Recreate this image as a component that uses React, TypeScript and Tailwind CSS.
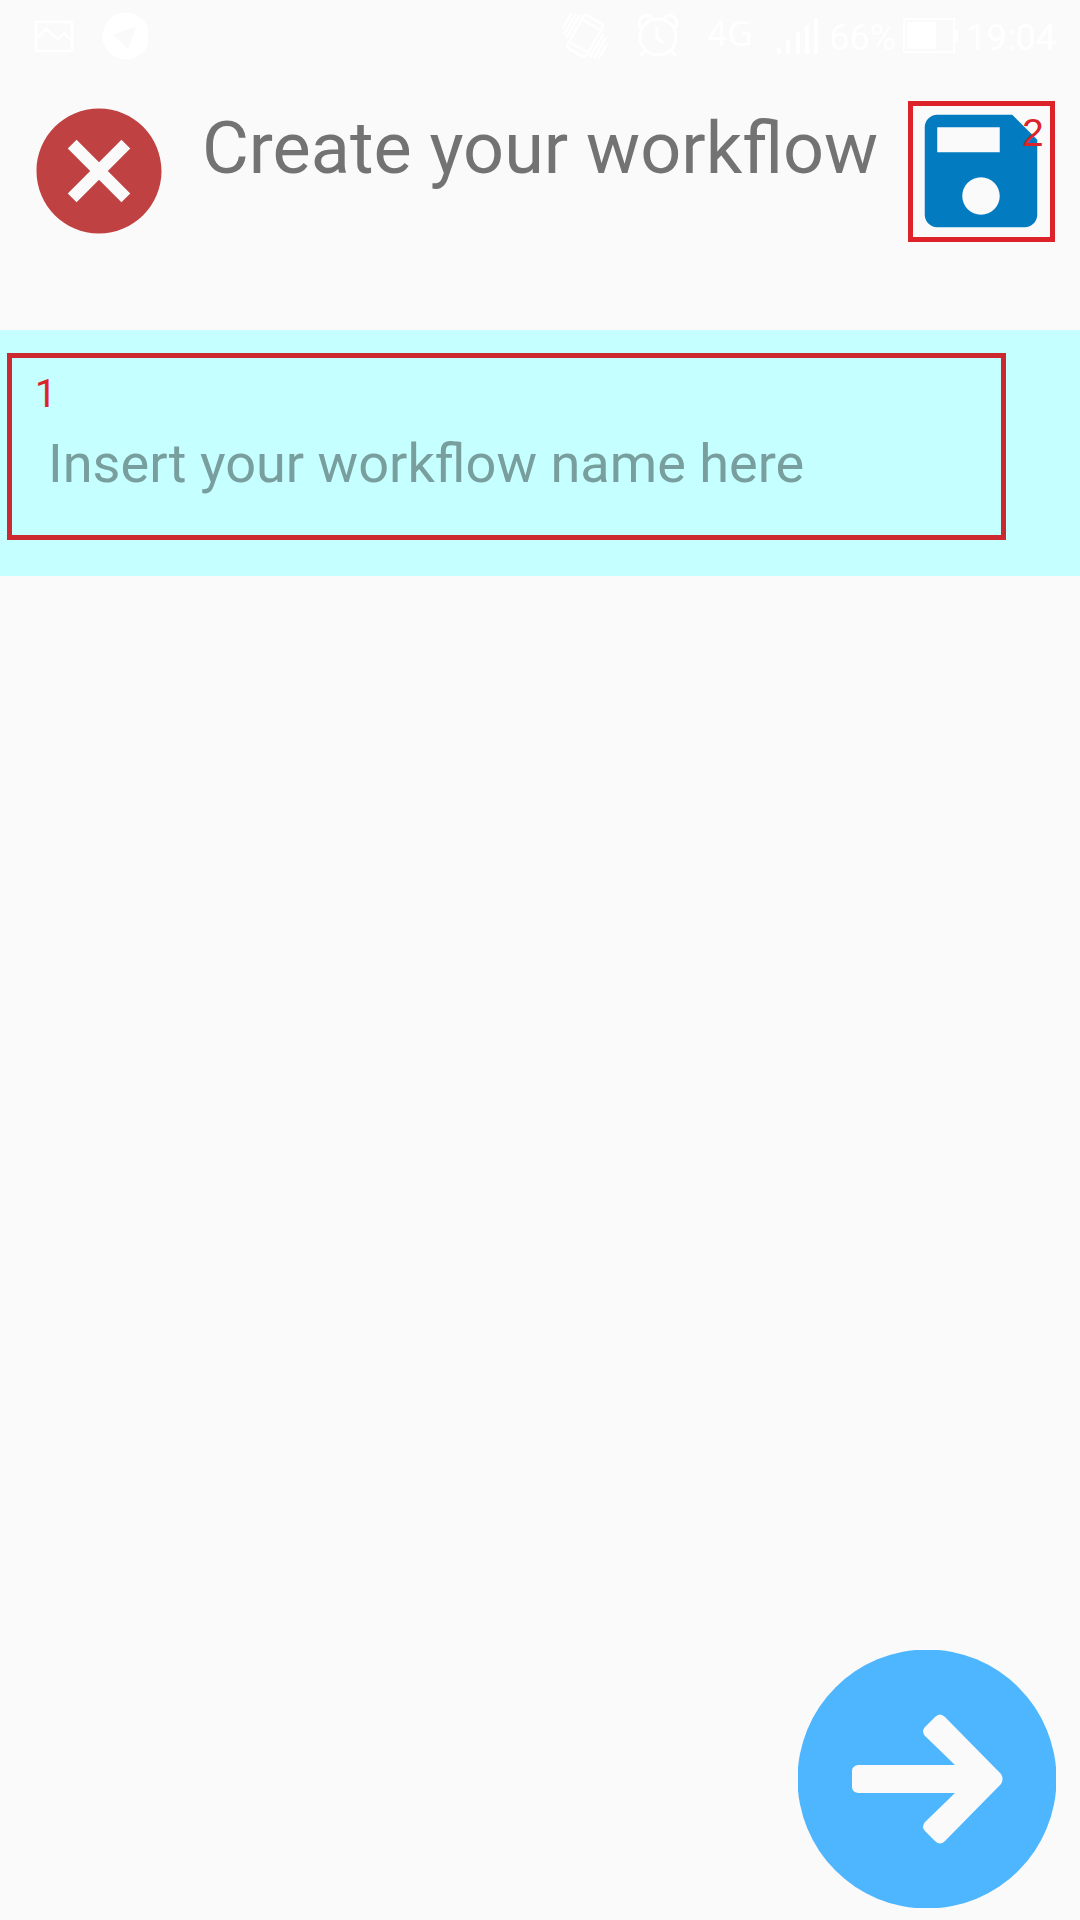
import React from "react";

function StatusBar() {
  return (
    <div className="flex h-[72px] w-full shrink-0 items-center justify-between pr-6 pl-[30px] text-white">
      <div className="flex items-center gap-[22px]">
        <svg width="48" height="48" viewBox="0 0 48 48" fill="none" stroke="currentColor" strokeWidth="2.5">
          <rect x="6" y="10" width="36" height="29" rx="2" />
          <path d="M6 27l10-10 12 10 6-6 8 8" />
        </svg>
        <svg width="48" height="48" viewBox="0 0 48 48" className="mr-2">
          <circle cx="26" cy="24" r="23.5" fill="#fff" />
          <path d="M12 23L36.500 14.500 28 38 21 29z" fill="#fafafa" />
        </svg>
      </div>
      <div className="flex items-center">
        <svg width="52" height="48" viewBox="0 0 52 48" fill="none" stroke="currentColor" strokeWidth="2.5">
          <g transform="rotate(30 26 24)">
            <rect x="15" y="5" width="22" height="38" rx="3" />
            <path d="M15 11h22M15 37h22M11 8v27M7 9v25M3 11v18M41 13v27M45 14v25M49 19v18" />
          </g>
        </svg>
        <svg width="48" height="48" viewBox="0 0 48 48" fill="none" stroke="currentColor" strokeWidth="3" className="ml-[23px]">
          <circle cx="24" cy="25" r="18" />
          <path d="M23 15v11l6 5M12 38l-6 6M36 38l6 6" />
          <path d="M7 16a7 7 0 1 1 11-10M30 6a7 7 0 1 1 11 10" />
        </svg>
        <span className="ml-[25px] -mt-2 w-[46px] font-['Noto_Sans'] text-[35px] leading-none">4G</span>
        <svg width="42" height="36" viewBox="0 0 42 36" fill="currentColor" className="ml-[24px]">
          <path d="M0 30h4v6H0zM9 22h4v14H9zM19 14h4v22h-4zM28 7h4v29h-4zM37 0h4v36h-4z" />
        </svg>
        <span className="mt-[3px] ml-[10px] w-[66px] font-['Roboto'] text-[36px] leading-none whitespace-nowrap">66%</span>
        <svg width="56" height="36" viewBox="0 0 56 36" className="ml-[8px]">
          <rect x="1" y="1" width="50" height="33" fill="none" stroke="#fff" strokeWidth="2" />
          <path d="M4 4h29v27H4zM52 12h3v11h-3z" fill="#fff" />
        </svg>
        <span className="mt-[3px] ml-[7px] font-['Roboto'] text-[36px] leading-none">19:04</span>
      </div>
    </div>
  );
}

function Header() {
  return (
    <header className="flex h-[258px] shrink-0 items-start px-6 pt-6">
      <button aria-label="Cancel" className="size-[150px] shrink-0">
        <svg viewBox="0 0 24 24" className="size-full" fill="#c04141">
          <path d="M12 2C6.47 2 2 6.47 2 12s4.47 10 10 10 10-4.47 10-10S17.53 2 12 2zm5 13.59L15.59 17 12 13.41 8.41 17 7 15.59 10.59 12 7 8.41 8.41 7 12 10.59 15.59 7 17 8.41 13.41 12 17 15.59z" />
        </svg>
      </button>
      <h1 className="ml-[28px] grow font-['Roboto'] text-[72px] leading-[106px] font-normal whitespace-nowrap text-[#737373]">
        Create your workflow
      </h1>
      <button aria-label="Save" className="relative size-[150px] shrink-0">
        <svg viewBox="0 0 24 24" className="size-full" fill="#027bc1">
          <path d="M17 3H5c-1.11 0-2 .9-2 2v14c0 1.1.89 2 2 2h14c1.1 0 2-.9 2-2V7l-4-4zm-5 16c-1.66 0-3-1.34-3-3s1.34-3 3-3 3 1.34 3 3-1.34 3-3 3zm3-10H5V5h10v4z" />
        </svg>
        <span className="absolute top-[5px] left-[2px] h-[141px] w-[147px] border-5 border-[#dc2329]" />
        <span className="absolute top-[17px] left-[116px] font-['Liberation_Sans'] text-[39px] leading-none text-[#dc2329]">2</span>
      </button>
    </header>
  );
}

function NameField() {
  return (
    <section className="h-[246px] shrink-0 bg-[#c5ffff] pt-[23px] pl-[7px]">
      <div className="flex h-[187px] w-[999px] flex-col items-start border-5 border-[#cb282f]">
        <span className="mt-[17px] ml-[23px] font-['Roboto'] text-[38px] leading-[38px] text-[#dc2329]">1</span>
        <span className="mt-[19px] ml-[36px] font-['Roboto'] text-[54.1px] leading-[64px] whitespace-nowrap text-[#799e9e]">
          Insert your workflow name here
        </span>
      </div>
    </section>
  );
}

export default function App() {
  return (
    <div className="flex h-[1920px] w-[1080px] flex-col overflow-hidden bg-[#fafafa]">
      <StatusBar />
      <Header />
      <NameField />
      <main className="flex grow items-end justify-end pr-6 pb-3">
        <button aria-label="Next" className="size-[258px]">
          <svg viewBox="0 0 258 258" className="size-full">
            <circle cx="129" cy="129" r="129.5" fill="#4db6ff" />
            <path
              d="M60 115H157L127 86Q123 81 127 77L137 67Q142 62 147 67L203 124Q206 129 203 134L147 191Q142 196 137 191L127 181Q123 177 127 172L157 143H60Q54 142 54 137V121Q54 116 60 115Z"
              fill="#fafafa"
            />
          </svg>
        </button>
      </main>
    </div>
  );
}
